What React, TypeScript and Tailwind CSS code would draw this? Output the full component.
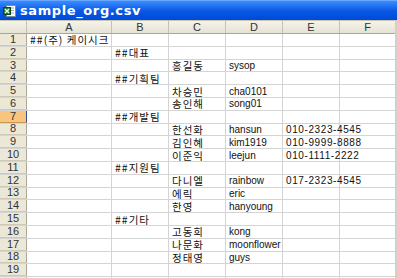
import React from "react";

const cols = ["A", "B", "C", "D", "E", "F"];
const colW = ["w-[85px]", "w-[57px]", "w-[57px]", "w-[57px]", "w-[57px]", "w-[56px]"];

// each row: [A, B, C, D, E, F]
const rows: string[][] = [
  ["##(주) 케이시크", "", "", "", "", ""],
  ["", "##대표", "", "", "", ""],
  ["", "", "홍길동", "sysop", "", ""],
  ["", "##기획팀", "", "", "", ""],
  ["", "", "차승민", "cha0101", "", ""],
  ["", "", "송인해", "song01", "", ""],
  ["", "##개발팀", "", "", "", ""],
  ["", "", "한선화", "hansun", "010-2323-4545", ""],
  ["", "", "김인혜", "kim1919", "010-9999-8888", ""],
  ["", "", "이준익", "leejun", "010-1111-2222", ""],
  ["", "##지원팀", "", "", "", ""],
  ["", "", "다니엘", "rainbow", "017-2323-4545", ""],
  ["", "", "에릭", "eric", "", ""],
  ["", "", "한영", "hanyoung", "", ""],
  ["", "##기타", "", "", "", ""],
  ["", "", "고동희", "kong", "", ""],
  ["", "", "나문화", "moonflower", "", ""],
  ["", "", "정태영", "guys", "", ""],
  ["", "", "", "", "", ""],
  ["", "", "", "", "", ""],
];

const hangul = /[\uac00-\ud7a3]/;

function Cell({ text, w }: { text: string; w: string }) {
  const ko = hangul.test(text);
  const phone = /^0\d\d-/.test(text);
  return (
    <div
      className={`${w} shrink-0 h-full border-r border-[#d4d4d4] flex items-center pl-[3px] pt-[1px] overflow-visible whitespace-nowrap text-[#111] ${
        ko
          ? "text-[10.5px] leading-[10px] tracking-[1px] font-['Noto_Sans_CJK_KR',sans-serif]"
          : "text-[10px] leading-[10px] font-['Liberation_Sans',sans-serif]"
      } ${phone ? "tracking-[0.6px]" : ""}`}
    >
      {text}
    </div>
  );
}

function ExcelIcon() {
  return (
    <svg width="14" height="14" viewBox="0 0 14 14">
      <rect x="3.5" y="1.5" width="9" height="11" fill="#fff" stroke="#7a8a9a" />
      <path d="M6 4h5M6 6.5h5M6 9h5" stroke="#9ab" strokeWidth="1" />
      <rect x="0.5" y="3.5" width="7" height="7" fill="#1f7a2e" stroke="#0d4a18" />
      <path d="M2 5l4 4M6 5l-4 4" stroke="#fff" strokeWidth="1.3" />
    </svg>
  );
}

export default function App() {
  return (
    <div className="w-[397px] h-[278px] overflow-hidden bg-white flex flex-col font-['Liberation_Sans',sans-serif]">
      {/* title bar */}
      <div className="h-[20px] shrink-0 flex items-center gap-[3px] pl-[3px] bg-gradient-to-b from-[#3a8cff] via-[#0a5ae6] to-[#0048d8] border-t border-[#6aa8ff]">
        <ExcelIcon />
        <span className="text-white text-[13px] font-bold font-['DejaVu_Sans',sans-serif] leading-none tracking-[0.6px]">
          sample_org.csv
        </span>
      </div>
      <div className="flex flex-1 min-h-0">
        <div className="flex flex-col w-[395px] shrink-0">
          {/* column header */}
          <div className="h-[14px] shrink-0 flex bg-gradient-to-b from-[#f4f3ec] to-[#e6e3d3] border-t border-[#c8c4b0] border-b border-b-[#aca899]">
            <div className="w-[27px] shrink-0 border-r border-[#c5c2b2]" />
            {cols.map((c, i) => (
              <div
                key={c}
                className={`${colW[i]} shrink-0 border-r border-[#c5c2b2] flex items-center justify-center text-[11px] leading-none text-[#333]`}
              >
                {c}
              </div>
            ))}
          </div>
          {rows.map((r, ri) => {
            const active = ri === 6;
            return (
              <div key={ri} className="h-[12.8px] shrink-0 flex border-b border-[#d4d4d4]">
                <div
                  className={`w-[27px] shrink-0 flex items-center justify-center text-[11px] leading-none text-[#333] border-r ${
                    active
                      ? "bg-[#f8c47e] border-r-[#3b4aa0] border-b border-b-[#c89a50]"
                      : "bg-[#ebe8d8] border-r-[#aca899] border-b border-b-[#cdc9b6]"
                  }`}
                >
                  {ri < 19 ? ri + 1 : ""}
                </div>
                {r.map((t, ci) => (
                  <Cell key={ci} text={t} w={colW[ci]} />
                ))}
              </div>
            );
          })}
        </div>
        <div className="flex-1 bg-[#d4d0c8]" />
      </div>
    </div>
  );
}
